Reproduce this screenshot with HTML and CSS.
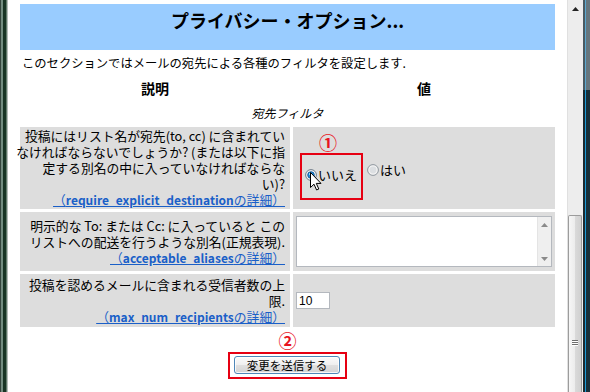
FILE: index.html
```html
<!DOCTYPE html>
<html lang="ja">
<head>
<meta charset="utf-8">
<title>プライバシー・オプション</title>
<link rel="stylesheet" href="styles.css">
</head>
<body>
<div class="window">
  <div class="frame-left"></div>
  <div class="viewport">
    <div class="page">
      <div class="title-band"><h1>プライバシー・オプション...</h1></div>
      <p class="intro">このセクションではメールの宛先による各種のフィルタを設定します.</p>
      <div class="grid">
        <div class="th">説明</div>
        <div class="th">値</div>
        <div class="section">宛先フィルタ</div>

        <div class="desc">
          <div>投稿にはリスト名が宛先(to, cc) に含まれてい<br>なければならないでしょうか? (または以下に指<br>定する別名の中に入っていなければならな<br>い)?<br><a href="#">（<b>require_explicit_destination</b>の詳細）</a></div>
        </div>
        <div class="val val-radio">
          <div class="radios">
            <span class="callout callout-radio">
              <span class="mark mark-1">①</span>
              <label class="radio">
                <svg class="rb" width="12" height="12" viewBox="0 0 12 12">
                  <circle cx="6" cy="6" r="5.4" fill="#eef1f4" stroke="#6f7c88" stroke-width="1"/>
                  <circle cx="6" cy="6" r="3.3" fill="#1f8fe0" stroke="#0d4d8c" stroke-width="0.8"/>
                  <circle cx="5.2" cy="5" r="1.2" fill="#a8e2ff"/>
                </svg>いいえ</label>
              <svg class="cursor" width="12" height="19" viewBox="0 0 12 19">
                <path d="M0.5 0.5 L0.5 15.5 L4 12.2 L6.6 18 L8.8 17 L6.3 11.4 L11 11.4 Z" fill="#fff" stroke="#000" stroke-width="1" stroke-linejoin="miter"/>
              </svg>
            </span>
            <label class="radio radio-2">
              <svg class="rb" width="12" height="12" viewBox="0 0 12 12">
                <circle cx="6" cy="6" r="5.4" fill="#f2f2f2" stroke="#8e969e" stroke-width="1"/>
                <circle cx="6" cy="6" r="3.4" fill="#dcdfe2"/>
              </svg>はい</label>
          </div>
        </div>

        <div class="desc">
          <div>明示的な To: または Cc: に入っていると この<br>リストへの配送を行うような別名(正規表現).<br><a href="#">（<b>acceptable_aliases</b>の詳細）</a></div>
        </div>
        <div class="val">
          <div class="textbox">
            <textarea class="ta"></textarea>
            <div class="ta-scroll">
              <svg width="7" height="4" viewBox="0 0 7 4"><path d="M0 4 L3.5 0 L7 4 Z" fill="#8a8a8a"/></svg>
              <svg width="7" height="4" viewBox="0 0 7 4"><path d="M0 0 L3.5 4 L7 0 Z" fill="#8a8a8a"/></svg>
            </div>
          </div>
        </div>

        <div class="desc">
          <div>投稿を認めるメールに含まれる受信者数の上<br>限.<br><a href="#">（<b>max_num_recipients</b>の詳細）</a></div>
        </div>
        <div class="val">
          <input class="num" type="text" value="10">
        </div>
      </div>

      <div class="submit">
        <span class="mark mark-2">②</span>
        <span class="callout callout-btn"><button class="btn" type="button">変更を送信する</button></span>
      </div>
    </div>
  </div>
  <div class="scrollbar">
    <div class="sb-up">
      <svg width="7" height="4" viewBox="0 0 7 4"><path d="M0 4 L3.5 0 L7 4 Z" fill="#222"/></svg>
    </div>
    <div class="sb-track"></div>
    <div class="sb-thumb">
      <div class="grip"><span></span><span></span><span></span></div>
    </div>
  </div>
  <div class="frame-right"><div class="fr-top"></div><div class="fr-bottom"></div></div>
</div>
</body>
</html>
```

FILE: styles.css
```css
* { box-sizing: border-box; }
html, body { margin: 0; padding: 0; }
body {
  width: 590px;
  height: 392px;
  overflow: hidden;
  background: #ffffff;
  font-family: "Noto Sans CJK JP", "Noto Sans", sans-serif;
  color: #000;
}
.window { display: flex; width: 590px; height: 392px; }

.frame-left {
  width: 8px;
  flex: none;
  background: linear-gradient(to right,
    #34443c 0, #34443c 1px,
    #738c80 1px, #738c80 3px,
    #183424 3px, #183424 6px,
    #5e7868 6px, #5e7868 7px,
    #b4bcb8 7px, #b4bcb8 8px);
}
.viewport { flex: 1; min-width: 0; overflow: hidden; }
.page { padding: 4px 12px 0; }

.title-band { height: 46px; background: #99ccff; padding-top: 2px; }
.title-band h1 {
  margin: 0;
  font-size: 18px;
  font-weight: bold;
  line-height: 28px;
  text-align: center;
}
.intro { margin: 5px 0 0 2px; font-size: 12.3px; line-height: 16px; }

.grid {
  display: grid;
  grid-template-columns: 270px 262px;
  grid-template-rows: 20px 23px 82px 59px 53px;
  gap: 3px;
  margin-top: 7px;
}
.th { font-weight: bold; font-size: 14px; line-height: 20px; text-align: center; }
.section {
  grid-column: 1 / span 2;
  font-style: italic;
  font-size: 12px;
  line-height: 23px;
  text-align: center;
}
.desc {
  background: #dddddd;
  display: flex;
  align-items: center;
  justify-content: flex-end;
  text-align: right;
  padding: 0 5px 0 4px;
  font-size: 12.8px;
  line-height: 16px;
  white-space: nowrap;
}
.desc a {
  color: #1a5fc8;
  text-decoration: underline;
  text-underline-offset: 1px;
}
.desc a b { font-weight: bold; font-size: 12px; }

.val {
  background: #dddddd;
  display: flex;
  align-items: center;
  padding-left: 3px;
}
.val-radio { align-items: flex-start; padding: 26px 0 0 7px; }
.radios { display: flex; align-items: flex-start; }
.callout { border: 2px solid #e60012; display: inline-block; position: relative; }
.callout-radio { padding: 7px 4px 12px 3px; }
.radio {
  display: inline-flex;
  align-items: center;
  gap: 1px;
  font-size: 13px;
  line-height: 16px;
}
.radio-2 { margin: 9px 0 0 4px; }
.rb { flex: none; }
.cursor { position: absolute; left: 8px; top: 17px; }
.mark {
  color: #e8141e;
  font-weight: bold;
  font-size: 18px;
  line-height: 18px;
}
.mark-1 { position: absolute; left: 17px; top: -22px; }

.textbox {
  width: 256px;
  height: 51px;
  display: flex;
  border: 1px solid #b4b8be;
  background: #fff;
}
.ta {
  flex: 1;
  border: none;
  resize: none;
  outline: none;
  margin: 0;
  padding: 2px;
  background: #fff;
}
.ta-scroll {
  width: 14px;
  flex: none;
  background: #efefef;
  border-left: 1px solid #e4e4e4;
  display: flex;
  flex-direction: column;
  justify-content: space-between;
  align-items: center;
  padding: 6px 0 5px;
}

.num {
  width: 34px;
  height: 17px;
  border: 1px solid #b4b8be;
  margin: 0;
  padding: 0 2px;
  font-family: "Liberation Sans", sans-serif;
  font-size: 12px;
  background: #fff;
}

.submit {
  display: flex;
  flex-direction: column;
  align-items: center;
  gap: 3px;
  margin-top: 4px;
}
.callout-btn { padding: 2px 5px 3px 4px; }
.btn {
  display: block;
  width: 106px;
  height: 18px;
  margin: 0;
  padding: 0;
  border: 1px solid #4f87b8;
  border-radius: 3px;
  background: linear-gradient(to bottom, #fbfbfb 0%, #efefef 50%, #e0e0e0 51%, #d4d4d4 100%);
  box-shadow: inset 0 0 0 1px rgba(255,255,255,0.8);
  font-family: "Noto Sans CJK JP", sans-serif;
  font-size: 11.5px;
  line-height: 15px;
  color: #000;
}

.scrollbar {
  width: 16px;
  flex: none;
  background: #ededed;
  border-left: 1px solid #e0e0e0;
  display: flex;
  flex-direction: column;
}
.sb-up { height: 17px; flex: none; display: flex; align-items: center; justify-content: center; }
.sb-track { height: 198px; flex: none; }
.sb-thumb {
  flex: 1;
  margin-right: 1px;
  border: 1px solid #9c9c9c;
  border-bottom: none;
  border-radius: 2px 2px 0 0;
  background: linear-gradient(to right, #f6f6f6, #ececec 50%, #dadada 51%, #d0d0d0);
  padding-top: 124px;
  display: flex;
  justify-content: center;
}
.grip { display: flex; flex-direction: column; gap: 1px; width: 6px; }
.grip span { display: block; height: 1px; background: #6e6e6e; box-shadow: 0 1px 0 #fff; }

.frame-right { width: 7px; flex: none; display: flex; flex-direction: column; }
.fr-top {
  height: 90px;
  background: linear-gradient(to right, #4a5a62 0, #4a5a62 2px, #5aa8d0 2px, #5aa8d0 3px, #66767e 3px);
}
.fr-bottom {
  flex: 1;
  background: linear-gradient(to right, #1c2a30 0, #1c2a30 2px, #1a9ad6 2px, #1a9ad6 3px, #18303a 3px);
}
```
